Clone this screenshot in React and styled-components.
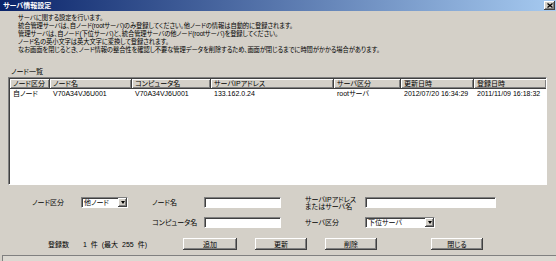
import styled, { createGlobalStyle } from 'styled-components';

const Colors = {
    face: '#d4d0c8',
    shadow: '#808080',
    darkShadow: '#404040',
    highlight: '#ffffff',
    text: '#000000',
};

const raised = `
    background: ${Colors.face};
    box-shadow: inset -1px -1px ${Colors.darkShadow}, inset 1px 1px ${Colors.highlight}, inset -2px -2px ${Colors.shadow};
`;

const sunken = `
    background: #ffffff;
    border: 1px solid;
    border-color: ${Colors.shadow} ${Colors.highlight} ${Colors.highlight} ${Colors.shadow};
    box-shadow: inset 1px 1px ${Colors.darkShadow};
`;

const GlobalStyle = createGlobalStyle`
    html, body {
        margin: 0;
        padding: 0;
        background: ${Colors.face};
        overflow: hidden;
    }
    body {
        font-family: "Liberation Sans", "Noto Sans CJK JP", sans-serif;
        font-size: 7px;
        color: ${Colors.text};
        font-feature-settings: "palt";
    }
`;

const Window = styled.div`
    width: 556px;
    height: 261px;
    display: flex;
    flex-direction: column;
    box-sizing: border-box;
    background: ${Colors.face};
`;

const TitleBar = styled.div`
    height: 11px;
    flex: none;
    display: flex;
    align-items: center;
    justify-content: space-between;
    padding: 0 1px 0 3px;
    background: linear-gradient(to right, #0a246a, #a6caf0);
`;

const Title = styled.span`
    color: #ffffff;
    font-weight: bold;
    font-size: 7px;
    line-height: 11px;
`;

const CloseButton = styled.div`
    width: 11px;
    height: 9px;
    display: flex;
    align-items: center;
    justify-content: center;
    ${raised}
`;

const Description = styled.div`
    padding: 3px 0 0 18px;
    font-size: 6.3px;
    letter-spacing: -0.1px;
`;

const DescriptionLine = styled.div`
    height: 8px;
    line-height: 8px;
    white-space: nowrap;
    overflow: visible;
`;

const ListCaption = styled.div`
    margin: 14px 0 0 11px;
    height: 8px;
    line-height: 8px;
`;

const ListBox = styled.div`
    margin: 1px 0 0 8px;
    width: 539px;
    height: 108px;
    box-sizing: border-box;
    overflow: hidden;
    ${sunken}
`;

const ListGrid = styled.div`
    display: grid;
    grid-template-columns: 40px 82px 79px 123px 67px 73px 73px;
    grid-template-rows: 10px;
    grid-auto-rows: 9px;
    padding: 1px 0 0 1px;
`;

const HeaderCell = styled.div`
    ${raised}
    padding-left: 3px;
    line-height: 10px;
    white-space: nowrap;
    overflow: hidden;
`;

const Cell = styled.div`
    padding-left: 3px;
    line-height: 9px;
    white-space: nowrap;
`;

const FormGrid = styled.div`
    display: grid;
    grid-template-columns: 64px 17px 47px 24px 52px 77px 24px 60px 131px;
    grid-auto-rows: 11px;
    row-gap: 9px;
    margin-top: 12px;
    align-items: center;
`;

const Label = styled.div`
    grid-column: ${props => props.$col};
    justify-self: ${props => props.$end ? 'end' : 'start'};
    line-height: 7px;
    white-space: nowrap;
`;

const TextField = styled.div`
    grid-column: ${props => props.$col};
    height: 11px;
    box-sizing: border-box;
    ${sunken}
`;

const Select = styled.div`
    grid-column: ${props => props.$col};
    width: ${props => props.$width}px;
    height: 11px;
    box-sizing: border-box;
    display: flex;
    align-items: center;
    ${sunken}
`;

const SelectValue = styled.span`
    flex: 1;
    padding-left: 2px;
    line-height: 9px;
    white-space: nowrap;
`;

const DropButton = styled.div`
    width: 9px;
    height: 9px;
    display: flex;
    align-items: center;
    justify-content: center;
    ${raised}
`;

const Arrow = styled.span`
    width: 0;
    height: 0;
    border-left: 2.5px solid transparent;
    border-right: 2.5px solid transparent;
    border-top: 3px solid ${Colors.text};
`;

const ActionRow = styled.div`
    display: flex;
    align-items: center;
    margin-top: 10px;
    padding-left: 48px;
    height: 12px;
`;

const CountLabel = styled.span`
    width: 35px;
    white-space: nowrap;
`;

const CountText = styled.span`
    width: 100px;
    white-space: nowrap;
    word-spacing: 2px;
`;

const Button = styled.div`
    width: ${props => props.$width || 52}px;
    height: 12px;
    margin-left: ${props => props.$gap ?? 18}px;
    display: flex;
    align-items: center;
    justify-content: center;
    ${raised}
`;

const StatusBar = styled.div`
    flex: 1;
    margin: 5px 0 0 2px;
    border-top: 1px solid ${Colors.shadow};
    border-left: 1px solid ${Colors.shadow};
    background: #dcd9d2;
`;

const descriptionLines = [
    'サーバに関する設定を行います。',
    '統合管理サーバは、自ノード(rootサーバ)のみ登録してください。他ノードの情報は自動的に登録されます。',
    '管理サーバは、自ノード(下位サーバ)と、統合管理サーバの他ノード(rootサーバ)を登録してください。',
    'ノード名の英小文字は英大文字に変換して登録されます。',
    'なお画面を閉じるとき、ノード情報の整合性を確認し不要な管理データを削除するため、画面が閉じるまでに時間がかかる場合があります。',
];

const headers = ['ノード区分', 'ノード名', 'コンピュータ名', 'サーバIPアドレス', 'サーバ区分', '更新日時', '登録日時'];

const nodes = [
    ['自ノード', 'V70A34VJ6U001', 'V70A34VJ6U001', '133.162.0.24', 'rootサーバ', '2012/07/20 16:34:29', '2011/11/09 16:18:32'],
];

const Dropdown = ({ col, width, value }) => (
    <Select $col={col} $width={width}>
        <SelectValue>{value}</SelectValue>
        <DropButton><Arrow /></DropButton>
    </Select>
);

const App = () => {
    return (
        <Window>
            <GlobalStyle />
            <TitleBar>
                <Title>サーバ情報設定</Title>
                <CloseButton>
                    <svg width="6" height="5" viewBox="0 0 6 5">
                        <path d="M0.5 0.5 L5.5 4.5 M5.5 0.5 L0.5 4.5" stroke="#000" strokeWidth="1.3" />
                    </svg>
                </CloseButton>
            </TitleBar>
            <Description>
                {descriptionLines.map((line, i) => <DescriptionLine key={i}>{line}</DescriptionLine>)}
            </Description>
            <ListCaption>ノード一覧</ListCaption>
            <ListBox>
                <ListGrid>
                    {headers.map(h => <HeaderCell key={h}>{h}</HeaderCell>)}
                    {nodes.map((row, r) => row.map((value, c) => (
                        <Cell key={`${r}-${c}`}>{value}</Cell>
                    )))}
                </ListGrid>
            </ListBox>
            <FormGrid>
                <Label $col={1} $end>ノード区分</Label>
                <Dropdown col={3} width={47} value="他ノード" />
                <Label $col={5}>ノード名</Label>
                <TextField $col={6} />
                <Label $col={8}>サーバIPアドレス<br />またはサーバ名</Label>
                <TextField $col={9} />

                <Label $col={5}>コンピュータ名</Label>
                <TextField $col={6} />
                <Label $col={8}>サーバ区分</Label>
                <Dropdown col={9} width={70} value="下位サーバ" />
            </FormGrid>
            <ActionRow>
                <CountLabel>登録数</CountLabel>
                <CountText>1 件 (最大 255 件)</CountText>
                <Button $width={54} $gap={0}>追加</Button>
                <Button>更新</Button>
                <Button>削除</Button>
                <Button $gap={54}>閉じる</Button>
            </ActionRow>
            <StatusBar />
        </Window>
    );
};

export default App;
